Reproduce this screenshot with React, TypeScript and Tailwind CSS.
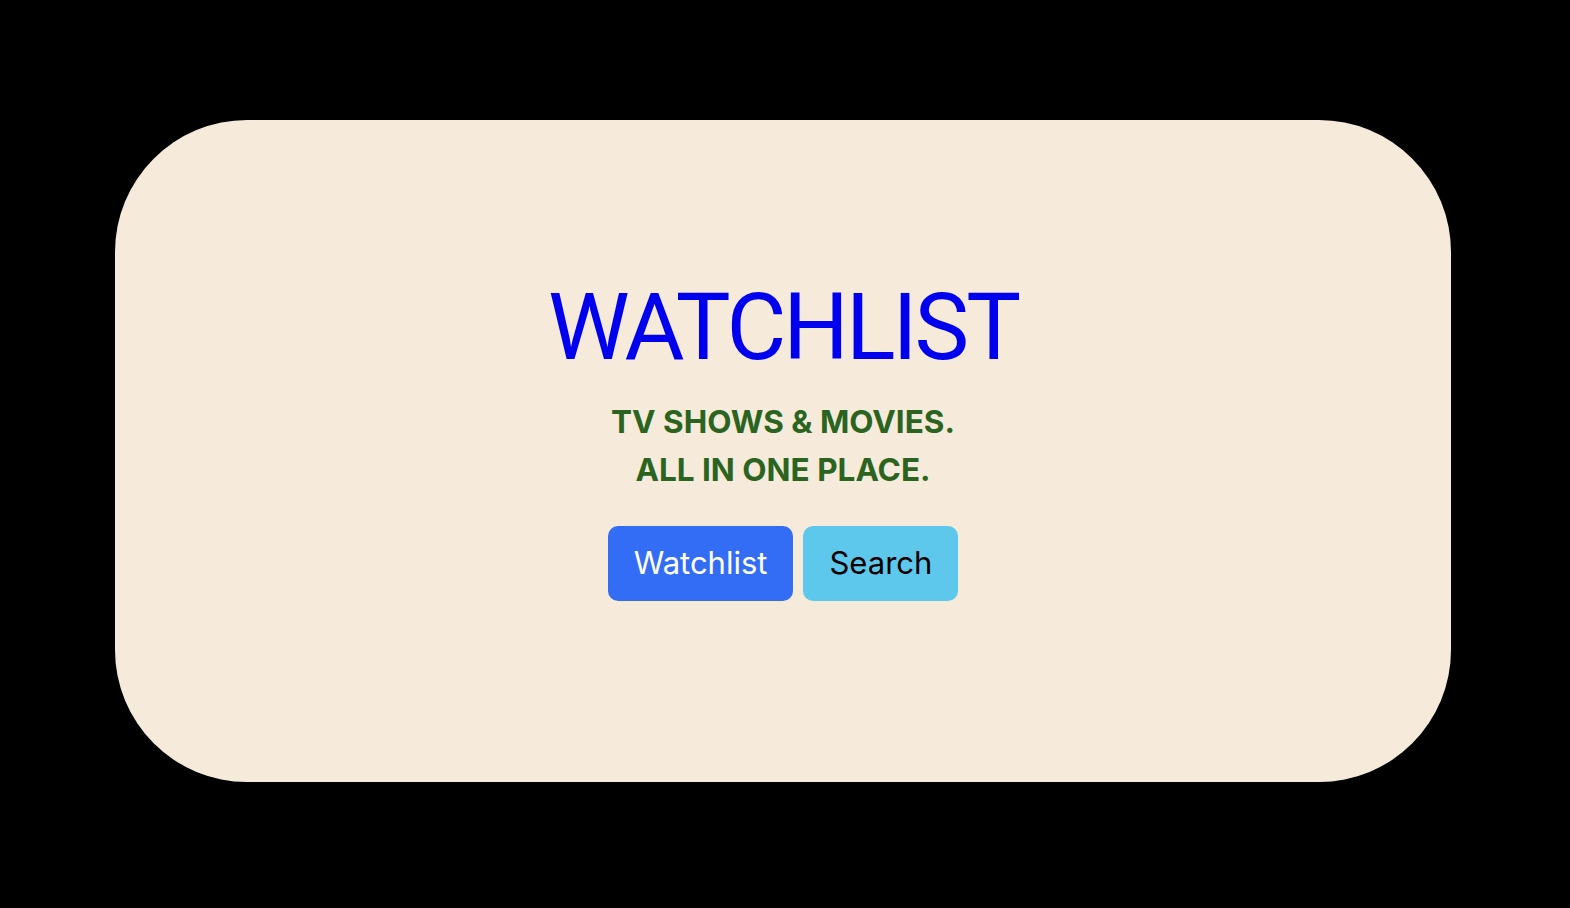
export default function App(): JSX.Element {
  return (
    <div className="w-full min-h-[908px] bg-black pt-[120px] pl-[115px] pr-[119px]">
      <div className="h-[662px] rounded-[132px] bg-[#f6ebda] flex flex-col items-center pt-[158px]">
        {/* Title */}
        <h1 className="font-['Roboto',Arial,sans-serif] font-normal text-[92px] leading-[100px] tracking-[-3px] text-[#0000ee]">
          WATCHLIST
        </h1>

        {/* Tagline */}
        <div className="mt-[20px] flex flex-col items-center font-['Inter',sans-serif] font-bold text-[31.5px] leading-[48px] text-[#2b6421]">
          <p>TV SHOWS &amp; MOVIES.</p>
          <p>ALL IN ONE PLACE.</p>
        </div>

        {/* Actions */}
        <div className="mt-[32px] flex gap-[10px] font-['Inter',sans-serif] text-[31px]">
          <button className="h-[75px] px-[26px] rounded-[10px] bg-[#346df5] text-white">
            Watchlist
          </button>
          <button className="h-[75px] px-[26px] rounded-[10px] bg-[#5dc8ec] text-black">
            Search
          </button>
        </div>
      </div>
    </div>
  );
}
